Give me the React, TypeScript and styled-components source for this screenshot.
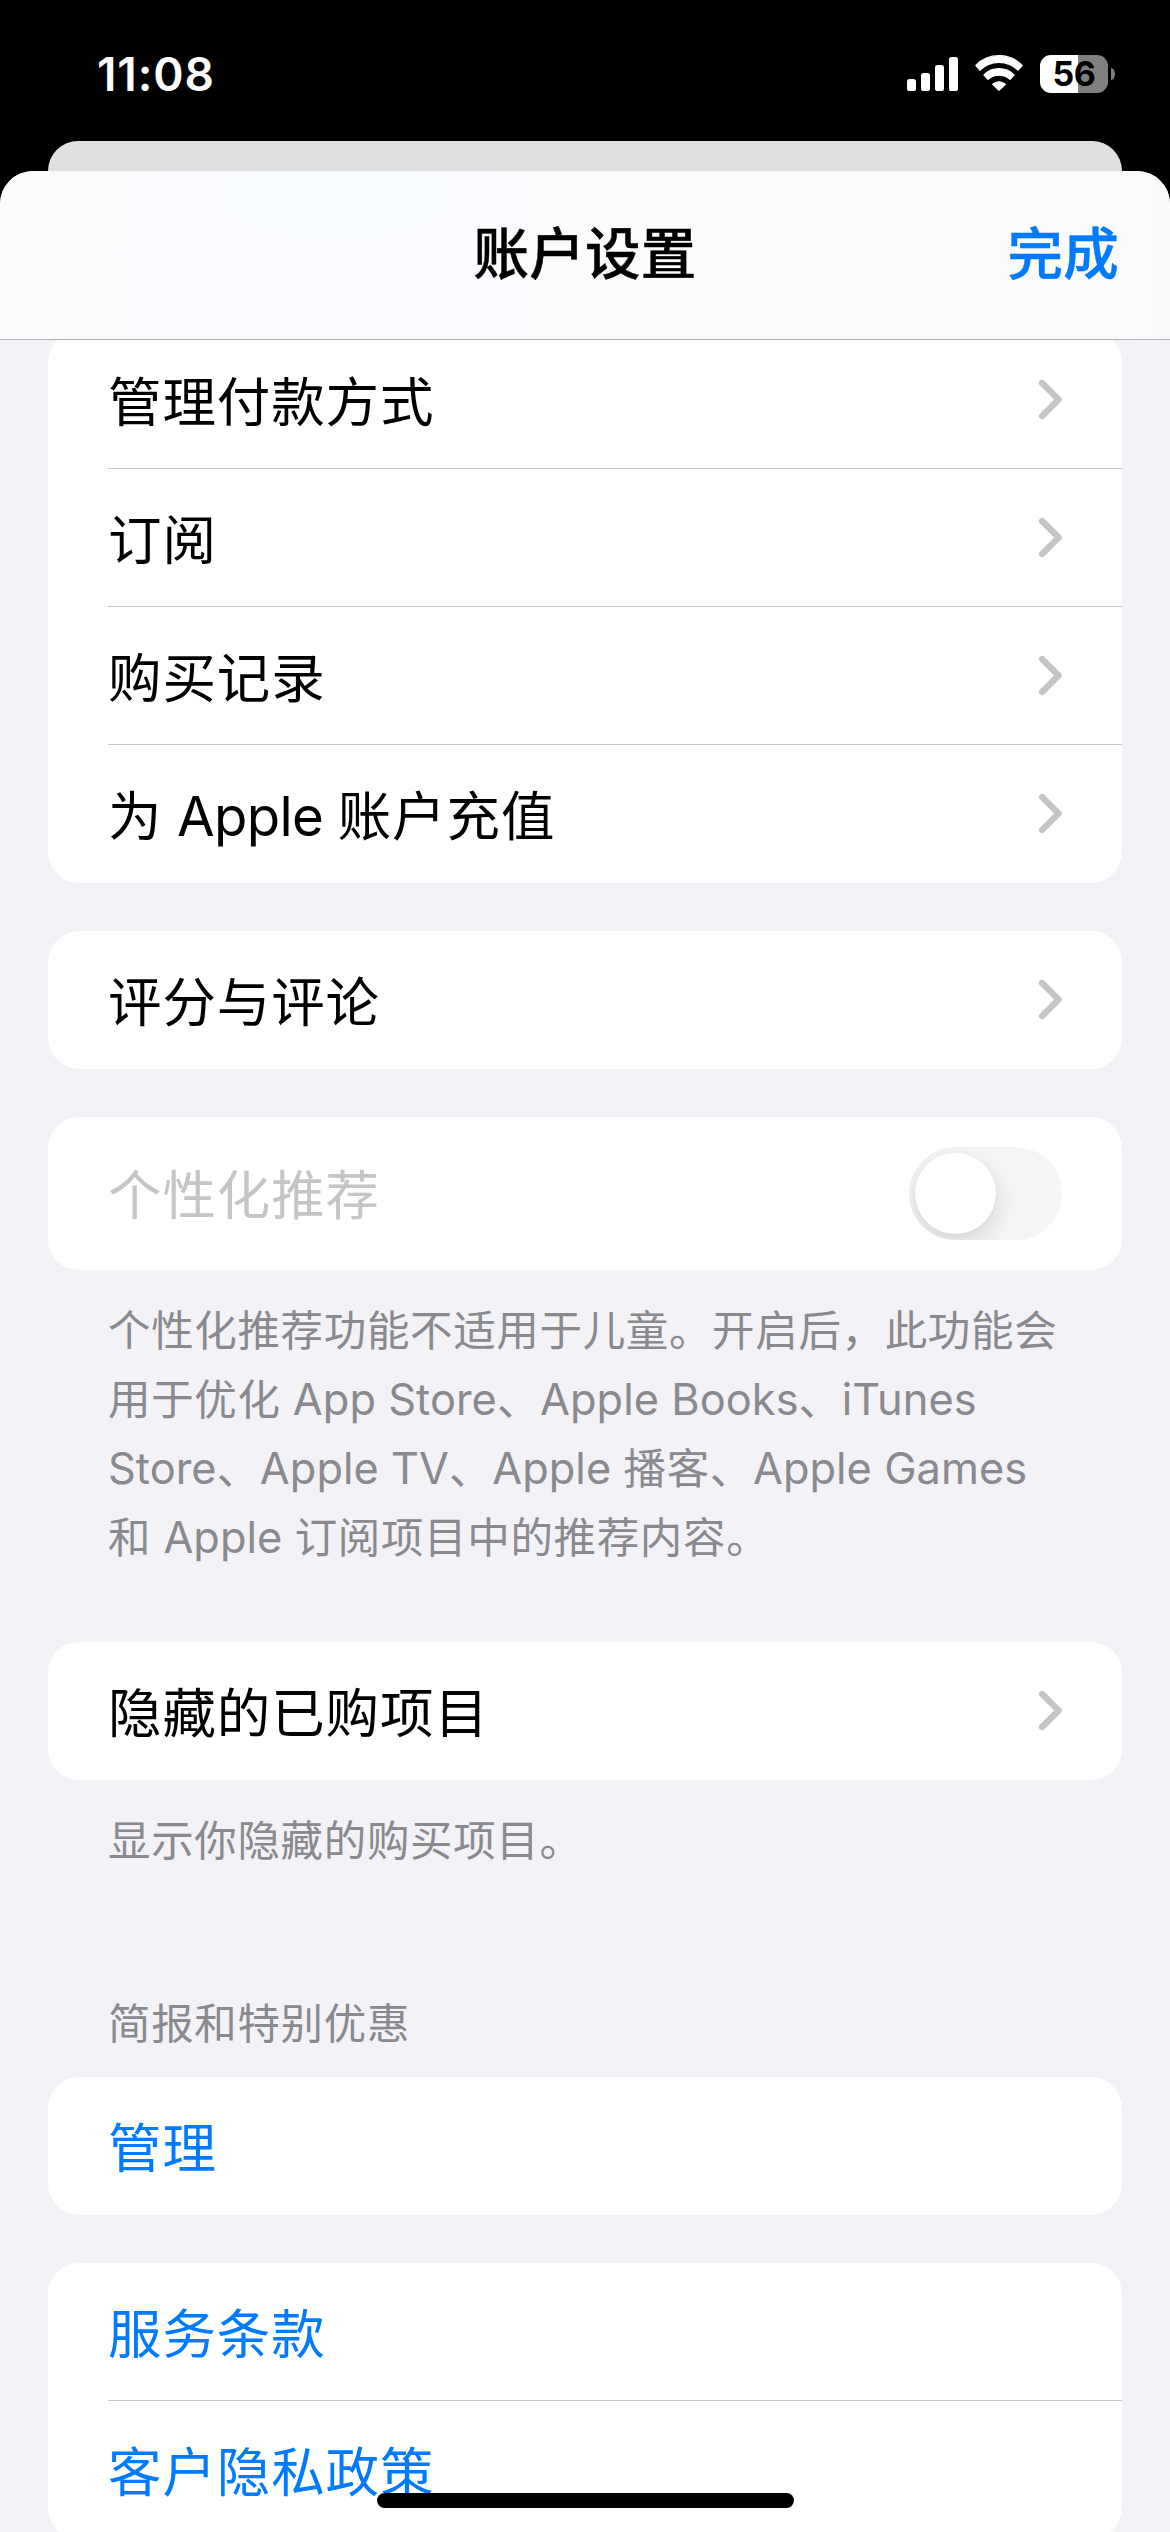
import React from "react";
import styled, { createGlobalStyle } from "styled-components";

const GlobalStyle = createGlobalStyle`
  html, body { margin: 0; padding: 0; background: #000; }
  * { box-sizing: border-box; }
  body { font-family: Inter, "Noto Sans CJK SC", sans-serif; }
`;

const Screen = styled.div`
  position: relative;
  width: 1170px;
  height: 2532px;
  overflow: hidden;
  background: #000;
  display: flex;
  flex-direction: column;
`;

const StatusBar = styled.div`
  height: 141px;
  flex: none;
  display: flex;
  align-items: flex-start;
  justify-content: space-between;
  padding: 55px 55px 0 97px;
`;

const Clock = styled.div`
  color: #fff;
  font-size: 46px;
  font-weight: 600;
  line-height: 39px;
  letter-spacing: 0.9px;
`;

const StatusIcons = styled.div`
  display: flex;
  align-items: center;
  height: 38px;
`;

const SignalIcon = styled.svg`
  width: 51px;
  height: 38px;
  margin-right: 17px;
`;

const WifiIcon = styled.svg`
  width: 48px;
  height: 38px;
  margin-right: 17px;
`;

const Battery = styled.div`
  width: 68px;
  height: 38px;
  border-radius: 11px;
  background: linear-gradient(90deg, #fff 0 38px, #808080 38px);
  color: #000;
  font-size: 34px;
  font-weight: 700;
  line-height: 38px;
  text-align: center;
  letter-spacing: -0.5px;
`;

const BatteryNub = styled.div`
  width: 4px;
  height: 12px;
  margin-left: 3px;
  border-radius: 0 4px 4px 0 / 0 6px 6px 0;
  background: #808080;
`;

const BackSheet = styled.div`
  flex: none;
  height: 30px;
  margin: 0 48px;
  border-radius: 32px 32px 0 0;
  background: #e0e0e0;
`;

const Sheet = styled.div`
  flex: 1;
  min-height: 0;
  display: flex;
  flex-direction: column;
  overflow: hidden;
  border-radius: 33px 33px 0 0;
  background: #f2f2f7;
`;

const Header = styled.div`
  flex: none;
  height: 169px;
  display: grid;
  grid-template-columns: 1fr auto 1fr;
  align-items: center;
  padding: 0 51px 3px;
  border-bottom: 1px solid #b1b1b5;
  background:
    radial-gradient(ellipse 160px 70px at 335px 20px, #f7fcff 0%, rgba(247, 252, 255, 0) 100%),
    linear-gradient(90deg, #fbfbfc 0%, #fafbff 20%, #fafbfe 42%, #fbfbfc 55%, #fbfbfc 90%, #fafafd 100%);
`;

const Title = styled.div`
  grid-column: 2;
  font-size: 55.5px;
  line-height: 76px;
  font-weight: 500;
  letter-spacing: 0.2px;
  -webkit-text-stroke: 0.5px currentColor;
  color: #000;
`;

const DoneButton = styled.div`
  justify-self: end;
  font-size: 55.5px;
  line-height: 76px;
  font-weight: 500;
  letter-spacing: 0.2px;
  -webkit-text-stroke: 0.5px currentColor;
  color: #007aff;
`;

const ScrollArea = styled.div`
  flex: 1;
  min-height: 0;
  overflow: hidden;
  padding: 0 48px;
`;

const List = styled.div`
  display: flex;
  flex-direction: column;
  margin-top: -9px;
`;

const Card = styled.div<{ $gap?: number }>`
  flex: none;
  margin-top: ${(p) => p.$gap ?? 0}px;
  border-radius: 31px;
  background: #fff;
  padding-left: 60px;
`;

const Row = styled.div<{ $tall?: boolean }>`
  height: ${(p) => (p.$tall ? 153 : 138)}px;
  display: flex;
  align-items: center;
  justify-content: space-between;
  padding-right: 60px;
  &:not(:last-child) {
    box-shadow: inset 0 -1px 0 #c6c6c8;
  }
`;

const Latin = styled.span`
  font-size: 1.02em;
  line-height: 1;
  letter-spacing: 0.05px;
`;

const Label = styled.div<{ $color?: string }>`
  padding-top: 5px;
  font-size: 53.5px;
  line-height: 76px;
  letter-spacing: 0.9px;
  white-space: pre;
  color: ${(p) => p.$color ?? "#000"};

  ${Latin} {
    letter-spacing: -0.7px;
  }
`;

const Note = styled.div<{ $gap: number }>`
  margin: ${(p) => p.$gap}px 0 0 60px;
  font-size: 42.5px;
  line-height: 69px;
  letter-spacing: 0.65px;
  white-space: pre;
  color: #8a8a8e;
`;

const Chevron = styled.svg`
  width: 26px;
  height: 40px;
  margin-right: -1px;
`;

const SwitchTrack = styled.div`
  width: 153px;
  height: 93px;
  border-radius: 47px;
  background: #f5f5f5;
  padding: 6px;
  overflow: hidden;
`;

const SwitchKnob = styled.div`
  width: 81px;
  height: 81px;
  border-radius: 50%;
  background: #fff;
  box-shadow: 0 9px 24px rgba(0, 0, 0, 0.13), 0 2px 4px rgba(0, 0, 0, 0.03);
`;

const HomeIndicator = styled.div`
  position: absolute;
  left: 377px;
  bottom: 24px;
  width: 417px;
  height: 15px;
  border-radius: 8px;
  background: #000;
`;

const mixed = (text: string) =>
  text.split(/([A-Za-z ]+)/).map((part, i) => (i % 2 ? <Latin key={i}>{part}</Latin> : part));

const Disclosure = () => (
  <Chevron viewBox="0 0 26 40" fill="none" stroke="#c5c5c7" strokeWidth="6.4" strokeLinecap="round" strokeLinejoin="round">
    <path d="M5.1 3 L21.6 19.5 L5.1 36" />
  </Chevron>
);

const accountRows = ["管理付款方式", "订阅", "购买记录", "为 Apple 账户充值"];
const recommendationNote = [
  "个性化推荐功能不适用于儿童。开启后，此功能会",
  "用于优化 App Store、Apple Books、iTunes",
  "Store、Apple TV、Apple 播客、Apple Games",
  "和 Apple 订阅项目中的推荐内容。",
];
const link = "#007aff";

export default function App() {
  return (
    <Screen>
      <GlobalStyle />
      <StatusBar>
        <Clock>11:08</Clock>
        <StatusIcons>
          <SignalIcon viewBox="0 0 51 38" fill="#fff">
            <rect x="0" y="24" width="9" height="12" rx="2.6" />
            <rect x="14" y="18" width="9" height="18" rx="2.6" />
            <rect x="28" y="10" width="9" height="26" rx="2.6" />
            <rect x="42" y="2" width="9" height="34" rx="2.6" />
          </SignalIcon>
          <WifiIcon viewBox="0 0 48 38" fill="#fff" stroke="#fff" strokeWidth="1.2" strokeLinejoin="round">
            <path d="M0.8 10.4 A32.6 32.6 0 0 1 47.2 10.4 L43.1 15.2 A27.2 27.2 0 0 0 4.9 15.2 Z" />
            <path d="M9 20 A21 21 0 0 1 39 20 L35 24.4 A16.4 16.4 0 0 0 13 24.4 Z" />
            <path d="M17.7 29.2 A9.6 9.6 0 0 1 30.3 29.2 L24 35.3 Z" />
          </WifiIcon>
          <Battery>56</Battery>
          <BatteryNub />
        </StatusIcons>
      </StatusBar>
      <BackSheet />
      <Sheet>
        <Header>
          <Title>账户设置</Title>
          <DoneButton>完成</DoneButton>
        </Header>
        <ScrollArea>
          <List>
            <Card>
              {accountRows.map((text) => (
                <Row key={text}>
                  <Label>{mixed(text)}</Label>
                  <Disclosure />
                </Row>
              ))}
            </Card>
            <Card $gap={48}>
              <Row>
                <Label>评分与评论</Label>
                <Disclosure />
              </Row>
            </Card>
            <Card $gap={48}>
              <Row $tall>
                <Label $color="#c5c5c7">个性化推荐</Label>
                <SwitchTrack>
                  <SwitchKnob />
                </SwitchTrack>
              </Row>
            </Card>
            <Note $gap={26}>
              {recommendationNote.map((line) => (
                <div key={line}>{mixed(line)}</div>
              ))}
            </Note>
            <Card $gap={70}>
              <Row>
                <Label>隐藏的已购项目</Label>
                <Disclosure />
              </Row>
            </Card>
            <Note $gap={26}>显示你隐藏的购买项目。</Note>
            <Note $gap={114}>简报和特别优惠</Note>
            <Card $gap={19}>
              <Row>
                <Label $color={link}>管理</Label>
              </Row>
            </Card>
            <Card $gap={48}>
              <Row>
                <Label $color={link}>服务条款</Label>
              </Row>
              <Row>
                <Label $color={link}>客户隐私政策</Label>
              </Row>
            </Card>
          </List>
        </ScrollArea>
      </Sheet>
      <HomeIndicator />
    </Screen>
  );
}
